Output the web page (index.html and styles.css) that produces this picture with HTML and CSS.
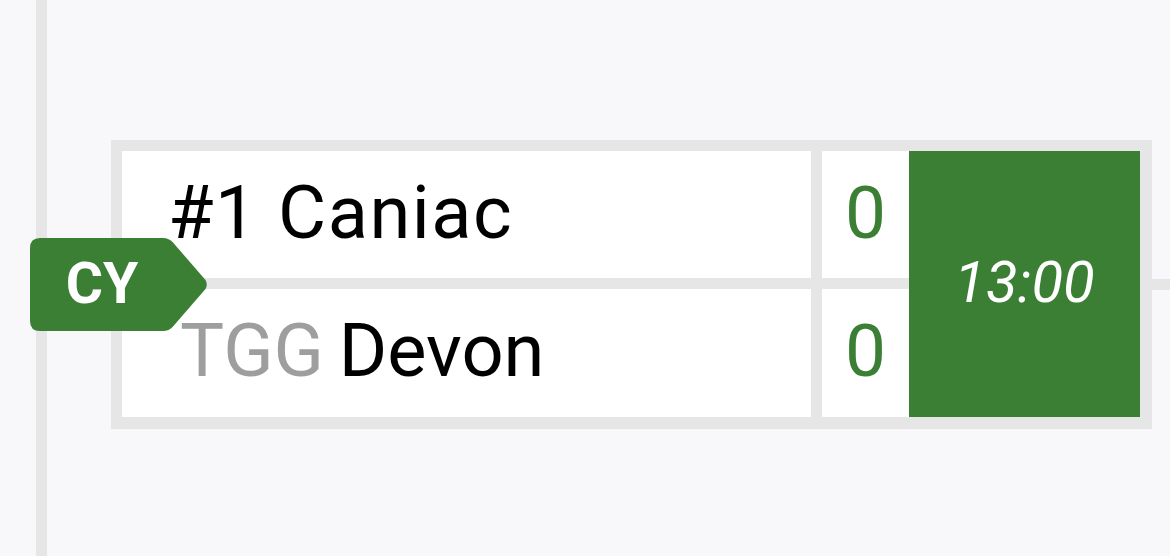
FILE: index.html
```html
<!DOCTYPE html>
<html>
<head>
<meta charset="utf-8">
<link rel="stylesheet" href="styles.css">
</head>
<body>
<div class="bracket">
  <div class="rail"></div>
  <div class="round">
    <div class="match">
      <div class="badge">
        <svg class="badge-shape" viewBox="0 0 178 93" width="178" height="93" aria-hidden="true">
          <path d="M10,0 H133 Q139,0 143,4.5 L175.5,42 Q178,46.5 175.5,51 L143,88.5 Q139,93 133,93 H10 Q0,93 0,83 V10 Q0,0 10,0 Z" fill="#3b7f35"/>
        </svg>
        <span class="badge-text">CY</span>
      </div>
      <div class="card">
        <div class="name name-top">#1 Caniac</div>
        <div class="score">0</div>
        <div class="time">13:00</div>
        <div class="name name-bottom"><span class="tag">TGG</span> Devon</div>
        <div class="score">0</div>
      </div>
      <div class="connector"></div>
    </div>
  </div>
</div>
</body>
</html>
```
FILE: styles.css
```css
html, body {
  margin: 0;
  padding: 0;
}
body {
  background: #f8f8fa;
  font-family: Roboto, "Liberation Sans", sans-serif;
  width: 1170px;
  height: 556px;
  overflow: hidden;
}
.bracket {
  display: flex;
  height: 556px;
}
.rail {
  width: 11px;
  margin-left: 36px;
  background: #e6e6e6;
  flex: none;
}
.round {
  flex: 1;
  padding-top: 140px;
  padding-left: 64px;
}
.match {
  position: relative;
  display: flex;
  align-items: center;
}
.card {
  flex: none;
  background: #e6e6e6;
  padding: 11px 12px 12px 11px;
  display: grid;
  grid-template-columns: 700px 87px 231px;
  grid-template-rows: 127px 128px;
  row-gap: 11px;
}
.name {
  background: #fff;
  border-right: 11px solid #e6e6e6;
  display: flex;
  align-items: center;
  padding-bottom: 4px;
  font-size: 74px;
  color: #000;
  white-space: nowrap;
}
.name-top {
  padding-left: 46px;
  letter-spacing: 1.5px;
}
.name-bottom {
  padding-left: 58px;
  padding-bottom: 6px;
}
.tag {
  color: #9e9e9e;
  margin-right: 0.2em;
}
.score {
  background: #fff;
  display: flex;
  align-items: center;
  justify-content: center;
  padding-bottom: 4px;
  font-size: 73px;
  color: #3b7f35;
}
.time {
  grid-column: 3;
  grid-row: 1 / span 2;
  background: #3b7f35;
  color: #fff;
  font-style: italic;
  font-size: 58px;
  display: flex;
  align-items: center;
  justify-content: center;
  padding-bottom: 4px;
}
.connector {
  flex: 1;
  height: 11px;
  margin-top: -1px;
  background: #e6e6e6;
}
.badge {
  position: absolute;
  left: -81px;
  top: 98px;
  width: 178px;
  height: 93px;
  display: flex;
  align-items: center;
  justify-content: center;
  padding-right: 34px;
  box-sizing: border-box;
  z-index: 2;
}
.badge-shape {
  position: absolute;
  left: 0;
  top: 0;
}
.badge-text {
  position: relative;
  color: #fff;
  font-weight: 700;
  font-size: 57px;
  padding-bottom: 2px;
}
```
